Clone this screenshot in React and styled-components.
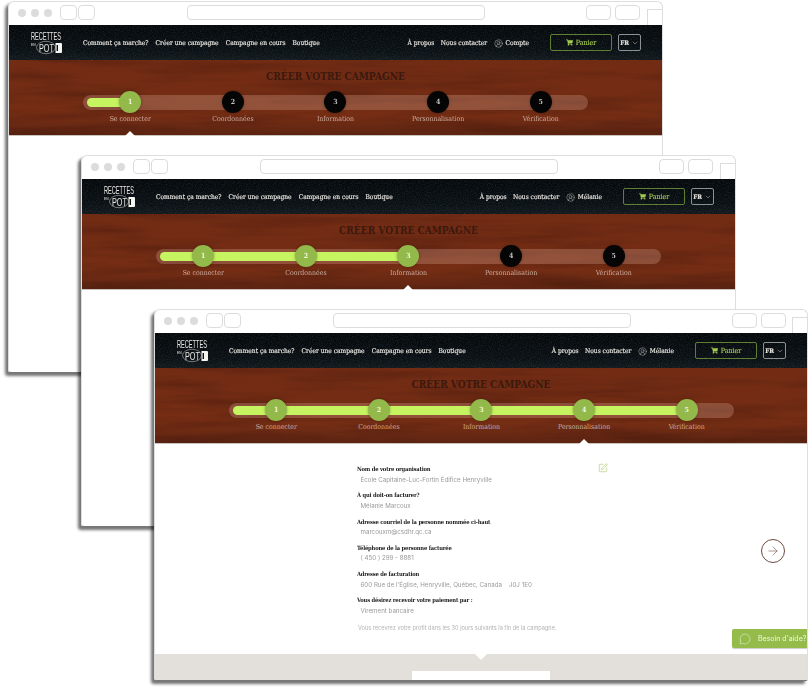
import React from 'react';
import styled, { createGlobalStyle } from 'styled-components';
import { FaShoppingCart } from 'react-icons/fa';
import { ChevronDown, ArrowRight, MessageCircle, SquarePen, CircleUserRound } from 'lucide-react';

const svgTex = (w, h, freq, oct, matrix, seed) =>
  `url("data:image/svg+xml,${encodeURIComponent(
    `<svg xmlns='http://www.w3.org/2000/svg' width='${w}' height='${h}'><filter id='n' x='0' y='0' width='100%' height='100%' color-interpolation-filters='sRGB'><feTurbulence type='fractalNoise' baseFrequency='${freq}' numOctaves='${oct}' seed='${seed}' stitchTiles='stitch'/><feColorMatrix values='${matrix}'/></filter><rect width='100%' height='100%' filter='url(#n)'/></svg>`
  )}")`;

const woodTex = svgTex(653, 76, '0.008 0.09', 4, '0 0 0 0 0.24  0 0 0 0 0.08  0 0 0 0 0.04  0 0 0 0.9 -0.38', 7);
const grainTex = svgTex(300, 40, '0.9', 2, '0 0 0 0 0.5  0 0 0 0 0.55  0 0 0 0 0.6  0 0 0 0.4 -0.17', 3);

const SLAB = '"DejaVu Serif Condensed", "DejaVu Serif", serif';
const SANS = '"Inter", "Liberation Sans", sans-serif';

const Global = createGlobalStyle`
  html, body { margin: 0; padding: 0; background: #fff; }
  body { width: 809px; height: 689px; overflow: hidden; font-family: ${SANS}; }
`;

const Desktop = styled.div`
  position: relative;
  width: 809px;
  height: 689px;
  background: #fff;
  overflow: hidden;
`;

const Window = styled.section`
  position: absolute;
  left: ${p => p.$x}px;
  top: ${p => p.$y}px;
  width: ${p => p.$w}px;
  height: 372px;
  box-sizing: border-box;
  display: flex;
  flex-direction: column;
  background: #fff;
  border: 1px solid #dedede;
  border-bottom: 1px solid #777;
  border-radius: 6px 6px 2px 3px;
  box-shadow: -3px 3px 3px rgba(0, 0, 0, 0.55);
  filter: blur(0.3px);
  overflow: hidden;
`;

const Chrome = styled.div`
  position: relative;
  flex: 0 0 23px;
  display: flex;
  align-items: flex-start;
  padding: 3px 0 0 9px;
  box-sizing: border-box;
`;

const Dot = styled.span`
  width: 8px;
  height: 8px;
  margin: 4px 5px 0 0;
  border-radius: 50%;
  background: #dcdcdc;
`;

const ChromeBox = styled.span`
  box-sizing: border-box;
  width: ${p => p.$w}px;
  height: 15px;
  margin-left: ${p => p.$ml}px;
  border: 1px solid #dcdcdc;
  border-radius: 4px;
  background: #fff;
`;

const ChromeTab = styled.span`
  position: absolute;
  right: 0;
  top: 7px;
  width: 15px;
  height: 16px;
  box-sizing: border-box;
  border: 1px solid #dcdcdc;
  border-right: 0;
  border-bottom: 0;
`;

const Header = styled.header`
  flex: 0 0 35px;
  display: flex;
  align-items: center;
  padding: 1px 21px 0 22px;
  box-sizing: border-box;
  background-color: #0a0f13;
  background-image: ${grainTex}, linear-gradient(180deg, #04080b 0%, #090f13 70%, #12191d 100%);
  font: 400 6.6px/10px ${SLAB};
  -webkit-text-stroke: 0.15px currentColor;
  color: #e8e6e0;
`;

const Logo = styled.svg`
  flex: 0 0 31px;
  width: 31px;
  height: 22px;
  margin-right: 21px;
  margin-top: -1px;
  overflow: visible;
`;

const LogoText = styled.text`
  fill: #e9e9e4;
  font-family: "Liberation Sans", sans-serif;
  font-weight: 400;
  -webkit-text-stroke: 0;
`;

const Nav = styled.nav`
  display: flex;
  align-items: center;
  gap: 7px;
  white-space: nowrap;
`;

const RightNav = styled(Nav)`
  margin-left: auto;
  gap: 6.5px;
`;

const Account = styled.span`
  display: inline-flex;
  align-items: center;
  gap: 3px;
  color: #e8e6e0;
`;

const CartButton = styled.button`
  box-sizing: border-box;
  width: 62px;
  height: 17px;
  margin: -1px 0 0 21px;
  padding: 0;
  display: inline-flex;
  align-items: center;
  justify-content: center;
  gap: 3px;
  background: transparent;
  border: 1px solid #5f7f35;
  border-radius: 2px;
  color: #a4cc53;
  font: 400 7px/10px ${SLAB};
  -webkit-text-stroke: 0.15px currentColor;
`;

const LangButton = styled.button`
  box-sizing: border-box;
  width: 23px;
  height: 17px;
  margin: -1px 0 0 6px;
  padding: 0;
  display: inline-flex;
  align-items: center;
  justify-content: center;
  gap: 2px;
  background: transparent;
  border: 1px solid #8b9296;
  border-radius: 2px;
  color: #e8e6e0;
  font: 700 6.3px/10px ${SLAB};
`;

const Hero = styled.div`
  flex: 0 0 76px;
  box-sizing: border-box;
  padding: 10px 0 0 74px;
  background-color: #732c14;
  background-image: ${woodTex}, linear-gradient(180deg, #732c14 0%, #752d14 75%, #5e2512 100%);
  border-bottom: 1px solid #c9c2bd;
`;

const Title = styled.h1`
  margin: 0 0 7px -74px;
  text-align: center;
  font: 700 10.1px/14px ${SLAB};
  color: #3c190e;
  white-space: nowrap;
`;

const Progress = styled.div`
  position: relative;
  width: 505px;
  height: 40px;
`;

const Track = styled.div`
  position: absolute;
  left: 0;
  right: 0;
  top: 4px;
  height: 15px;
  border-radius: 8px;
  background: rgba(255, 215, 195, 0.22);
`;

const Fill = styled.div`
  position: absolute;
  left: 4px;
  top: 3px;
  height: 9px;
  border-radius: 5px;
  background: #c6f460;
`;

const Steps = styled.ol`
  position: relative;
  display: grid;
  grid-template-columns: repeat(5, 102.6px);
  margin: 0 0 0 -4px;
  padding: 0;
  list-style: none;
`;

const Step = styled.li`
  position: relative;
  display: flex;
  flex-direction: column;
  align-items: center;
  &::after {
    content: '';
    display: ${p => (p.$current ? 'block' : 'none')};
    position: absolute;
    top: 40px;
    left: 50%;
    margin-left: -5px;
    border: 5px solid transparent;
    border-top: 0;
    border-bottom-color: #fff;
  }
`;

const Bubble = styled.span`
  width: 22px;
  height: 22px;
  border-radius: 50%;
  display: flex;
  align-items: center;
  justify-content: center;
  background: ${p => (p.$done ? '#93b94a' : '#050505')};
  color: ${p => (p.$done ? '#eef5dc' : '#bdbdbd')};
  font: 700 7px/10px ${SLAB};
  box-shadow: 0 0 3px rgba(0, 0, 0, 0.3);
`;

const StepLabel = styled.span`
  margin-top: 1px;
  font: 400 6.9px/10px ${SLAB};
  color: #ccaea0;
  white-space: nowrap;
`;

const Body = styled.div`
  position: relative;
  flex: 1;
  display: flex;
  flex-direction: column;
  min-height: 0;
`;

const Details = styled.div`
  position: relative;
  flex: 1;
  box-sizing: border-box;
  padding: 20px 0 0 202px;
`;

const Field = styled.div`
  height: 26.3px;
`;

const FieldLabel = styled.div`
  font: 700 5.8px/10px ${SLAB};
  letter-spacing: -0.19px;
  color: #222;
  white-space: nowrap;
`;

const FieldValue = styled.div`
  padding-left: 3.5px;
  margin-top: 0.5px;
  font: 400 6.2px/10px ${SANS};
  color: #999;
  white-space: pre;
`;

const Note = styled.p`
  margin: 1px 0 0 1px;
  font: 400 5.6px/10px ${SANS};
  color: #b3b3b3;
  white-space: nowrap;
`;

const EditIcon = styled.span`
  position: absolute;
  left: 443px;
  top: 19px;
  display: flex;
  color: #a3c75f;
`;

const NextButton = styled.button`
  position: absolute;
  left: 606px;
  top: 95px;
  width: 24px;
  height: 24px;
  padding: 0;
  display: flex;
  align-items: center;
  justify-content: center;
  background: #fff;
  border: 1px solid #6d4a3f;
  border-radius: 50%;
  color: #6d4a3f;
`;

const HelpButton = styled.button`
  position: absolute;
  right: 0;
  top: 185px;
  width: 75px;
  height: 19px;
  box-sizing: border-box;
  padding: 0 0 0 7px;
  display: flex;
  align-items: center;
  gap: 7px;
  background: #95bc4b;
  border: 0;
  border-radius: 2px 0 0 2px;
  box-shadow: 0 1px 1px rgba(0, 0, 0, 0.2);
  color: #f2f6e6;
  font: 400 7px/10px ${SANS};
  white-space: nowrap;
`;

const Footer = styled.footer`
  position: relative;
  flex: 0 0 26px;
  background: #e3dfdb;
  &::before {
    content: '';
    position: absolute;
    left: 320px;
    top: 0;
    border: 6px solid transparent;
    border-bottom: 0;
    border-top-color: #fff;
  }
`;

const FooterCard = styled.div`
  position: absolute;
  left: 257px;
  bottom: 0;
  width: 138px;
  height: 9px;
  background: #fff;
`;

const STEPS = ['Se connecter', 'Coordonnées', 'Information', 'Personnalisation', 'Vérification'];

const FIELDS = [
  ['Nom de votre organisation', 'École Capitaine-Luc-Fortin Édifice Henryville'],
  ['À qui doit-on facturer?', 'Mélanie Marcoux'],
  ['Adresse courriel de la personne nommée ci-haut', 'marcouxm@csdhr.qc.ca'],
  ['Téléphone de la personne facturée', '( 450 ) 299 - 8881'],
  ['Adresse de facturation', "600 Rue de l'Église, Henryville, Québec, Canada    J0J 1E0"],
  ['Vous désirez recevoir votre paiement par :', 'Virement bancaire'],
];

const WINDOWS = [
  { x: 8, y: 1, w: 655, account: 'Compte', done: 1, current: 1, fill: 50 },
  { x: 81, y: 155, w: 655, account: 'Mélanie', done: 3, current: 3, fill: 250 },
  { x: 154, y: 309, w: 654, account: 'Mélanie', done: 5, current: 4, fill: 455, details: true },
];

function BrandLogo() {
  return (
    <Logo viewBox="0 0 31 22" aria-label="Recettes en pot">
      <LogoText x="0" y="8" fontSize="11" textLength="30" lengthAdjust="spacingAndGlyphs">RECETTES</LogoText>
      <LogoText x="0" y="13.5" fontSize="4" textLength="4.5" lengthAdjust="spacingAndGlyphs">EN</LogoText>
      <ellipse cx="15" cy="15.5" rx="9.5" ry="6.2" fill="none" stroke="#d8d8d4" strokeWidth="0.5" />
      <LogoText x="8" y="20" fontSize="11" textLength="15" lengthAdjust="spacingAndGlyphs">POT</LogoText>
      <path d="M24.5 11h5.5a1 1 0 0 1 1 1v8a1 1 0 0 1-1 1h-5.5z" fill="#f4f4f0" />
      <rect x="25.6" y="13" width="1.4" height="6" fill="#111" />
    </Logo>
  );
}

function BrowserWindow({ x, y, w, account, done, current, fill, details }) {
  return (
    <Window $x={x} $y={y} $w={w}>
      <Chrome>
        <Dot /><Dot /><Dot />
        <ChromeBox $w={17} $ml={3} />
        <ChromeBox $w={17} $ml={1} />
        <ChromeBox $w={298} $ml={92} />
        <ChromeBox $w={25} $ml={101} />
        <ChromeBox $w={25} $ml={4} />
        <ChromeTab />
      </Chrome>
      <Header>
        <BrandLogo />
        <Nav>
          <span>Comment ça marche?</span>
          <span>Créer une campagne</span>
          <span>Campagne en cours</span>
          <span>Boutique</span>
        </Nav>
        <RightNav>
          <span>À propos</span>
          <span>Nous contacter</span>
          <Account><CircleUserRound size={9} strokeWidth={1} />{account}</Account>
        </RightNav>
        <CartButton><FaShoppingCart size={7} />Panier</CartButton>
        <LangButton>FR<ChevronDown size={8} strokeWidth={1.2} /></LangButton>
      </Header>
      <Hero>
        <Title>CRÉER VOTRE CAMPAGNE</Title>
        <Progress>
          <Track><Fill style={{ width: fill }} /></Track>
          <Steps>
            {STEPS.map((label, i) => (
              <Step key={label} $current={i + 1 === current}>
                <Bubble $done={i < done}>{i + 1}</Bubble>
                <StepLabel>{label}</StepLabel>
              </Step>
            ))}
          </Steps>
        </Progress>
      </Hero>
      {details ? (
        <Body>
          <Details>
            {FIELDS.map(([label, value]) => (
              <Field key={label}>
                <FieldLabel>{label}</FieldLabel>
                <FieldValue>{value}</FieldValue>
              </Field>
            ))}
            <Note>Vous recevrez votre profit dans les 30 jours suivants la fin de la campagne.</Note>
            <EditIcon><SquarePen size={10} strokeWidth={1.4} /></EditIcon>
            <NextButton aria-label="Suivant"><ArrowRight size={14} strokeWidth={1} /></NextButton>
            <HelpButton><MessageCircle size={12} strokeWidth={1} />Besoin d'aide?</HelpButton>
          </Details>
          <Footer><FooterCard /></Footer>
        </Body>
      ) : (
        <Body />
      )}
    </Window>
  );
}

export default function App() {
  return (
    <Desktop>
      <Global />
      {WINDOWS.map(win => <BrowserWindow key={win.x} {...win} />)}
    </Desktop>
  );
}
